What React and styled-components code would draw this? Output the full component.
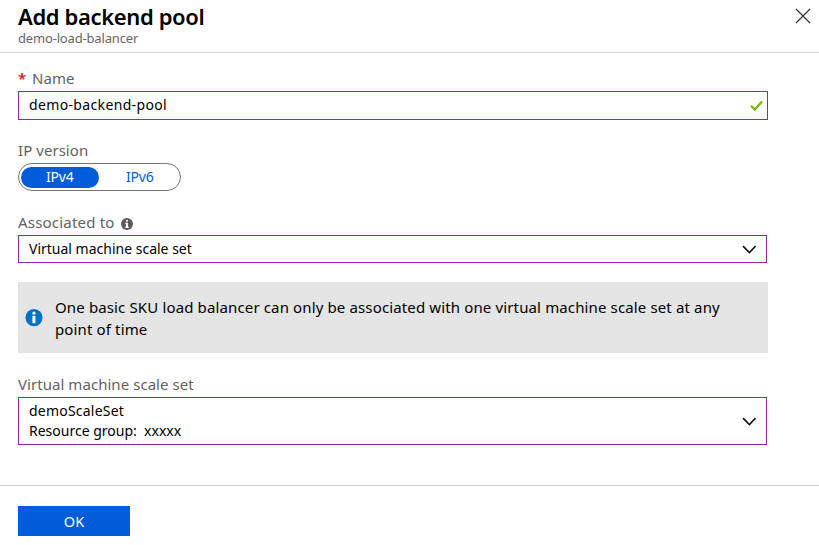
import React, { useState } from "react";
import styled, { createGlobalStyle } from "styled-components";

const GlobalStyle = createGlobalStyle`
  * { box-sizing: border-box; }
  html, body { margin: 0; background: #fff; overflow: hidden; }
  body, button { font-family: "Noto Sans", "Open Sans", sans-serif; }
`;

const Blade = styled.main`
  display: flex;
  flex-direction: column;
  height: 545px;
  color: #000;
`;

const Header = styled.header`
  display: flex;
  justify-content: space-between;
  height: 53px;
  padding: 3px 8px 0 18px;
  border-bottom: 1px solid #d2d2d2;
`;

const Title = styled.h1`
  margin: 0;
  font-size: 22px;
  font-weight: 600;
  line-height: 26px;
  letter-spacing: -0.37px;
`;

const Subtitle = styled.div`
  margin-top: 1px;
  font-size: 13px;
  line-height: 16px;
  letter-spacing: -0.17px;
  color: #666;
`;

const CloseButton = styled.button`
  display: flex;
  align-items: center;
  justify-content: center;
  width: 16px;
  height: 16px;
  margin-top: 5px;
  padding: 0;
  border: 0;
  background: none;
`;

const Form = styled.section`
  display: flex;
  flex-direction: column;
  height: 432px;
  padding: 13px 51px 0 18px;
`;

const Field = styled.div`
  display: flex;
  flex-direction: column;
  margin-bottom: ${({ $gap }) => $gap}px;
`;

const Label = styled.div`
  display: flex;
  align-items: center;
  height: 24px;
  margin-bottom: 1px;
  font-size: 15px;
  line-height: 24px;
  letter-spacing: ${({ $tracking = 0.05 }) => $tracking}px;
  color: #626262;
`;

const Required = styled.span`
  width: 14px;
  height: 24px;
  font-size: 15px;
  font-weight: 600;
  line-height: 24px;
  color: #e81123;
`;

const InfoMark = styled.span`
  display: flex;
  margin: 3px 0 0 6px;
`;

const Box = styled.div`
  display: flex;
  align-items: center;
  justify-content: space-between;
  width: ${({ $width }) => $width}px;
  height: ${({ $height }) => $height}px;
  padding: 0 ${({ $end }) => $end}px 0 10px;
  border: 1px solid #8a2da5;
`;

const Value = styled.div`
  font-size: 14px;
  line-height: 20px;
  letter-spacing: ${({ $tracking = 0 }) => $tracking}px;
  margin-top: ${({ $shift = 0 }) => $shift}px;
  white-space: pre;
`;

const Toggle = styled.div`
  display: flex;
  width: 163px;
  height: 28px;
  padding: 3px 2px;
  border: 1px solid #767676;
  border-radius: 14px;
`;

const Option = styled.button`
  width: ${({ $on }) => ($on ? 78 : 80)}px;
  height: 20.5px;
  padding: 0;
  border: 0;
  border-radius: 11px;
  font-size: 14px;
  line-height: 20px;
  letter-spacing: -0.15px;
  text-indent: ${({ $on }) => ($on ? 0 : 3)}px;
  background: ${({ $on }) => ($on ? "#015cda" : "transparent")};
  color: ${({ $on }) => ($on ? "#fff" : "#015cda")};
`;

const Notice = styled.div`
  display: flex;
  align-items: center;
  gap: 12px;
  width: 750px;
  height: 71px;
  margin-bottom: 19px;
  padding-left: 7px;
  background: #e5e5e5;
`;

const NoticeText = styled.p`
  margin: 1px 0 0;
  font-size: 15px;
  line-height: 22px;
  letter-spacing: 0.135px;
  white-space: nowrap;
`;

const Footer = styled.footer`
  flex: 1;
  padding: 20px 18px 0;
  border-top: 1px solid #d2d2d2;
`;

const OkButton = styled.button`
  display: block;
  width: 112px;
  height: 30px;
  padding: 0;
  border: 0;
  background: #015cda;
  color: #fff;
  font-size: 14.5px;
  line-height: 30px;
`;

const Close = () => (
  <svg width="16" height="16" viewBox="0 0 16 16" fill="none" stroke="#333" strokeWidth="1.2">
    <path d="M1 1l14 14M15 1L1 15" />
  </svg>
);

const Check = () => (
  <svg width="13" height="12" viewBox="0 0 13 12" fill="none" stroke="#76b900" strokeWidth="2.3">
    <path d="M1 5.7l3.9 3.9L12 1.4" />
  </svg>
);

const Chevron = () => (
  <svg width="14" height="9" viewBox="0 0 14 9" fill="none" stroke="#111" strokeWidth="1.6">
    <path d="M1 1.1L7.4 7.5l6.2-6.4" />
  </svg>
);

const LabelInfo = () => (
  <svg width="12" height="12" viewBox="0 0 12 12">
    <circle cx="6" cy="6" r="6" fill="#5c5c5c" />
    <path d="M5 2h2v1.6H5zM4.3 4.8H7v4h.8V10H4.3V8.8H5V6h-.7z" fill="#fff" />
  </svg>
);

const NoticeInfo = () => (
  <svg width="18" height="18" viewBox="0 0 18 18">
    <circle cx="9" cy="8.6" r="8.6" fill="#0072c6" />
    <circle cx="9" cy="4.2" r="1.6" fill="#fff" />
    <path d="M7.4 6.8h3v7.4h-3z" fill="#fff" />
  </svg>
);

export default function App() {
  const [version, setVersion] = useState("IPv4");
  return (
    <>
      <GlobalStyle />
      <Blade>
        <Header>
          <div>
            <Title>Add backend pool</Title>
            <Subtitle>demo-load-balancer</Subtitle>
          </div>
          <CloseButton aria-label="Close"><Close /></CloseButton>
        </Header>
        <Form>
          <Field $gap={18}>
            <Label><Required>*</Required>Name</Label>
            <Box $width={750} $height={29} $end={4}>
              <Value $tracking={0.35} $shift={-2}>demo-backend-pool</Value>
              <Check />
            </Box>
          </Field>
          <Field $gap={19}>
            <Label>IP version</Label>
            <Toggle>
              {["IPv4", "IPv6"].map((v) => (
                <Option key={v} $on={v === version} onClick={() => setVersion(v)}>{v}</Option>
              ))}
            </Toggle>
          </Field>
          <Field $gap={19}>
            <Label $tracking={0.2}>
              Associated to
              <InfoMark><LabelInfo /></InfoMark>
            </Label>
            <Box $width={749} $height={28} $end={10}>
              <Value>Virtual machine scale set</Value>
              <Chevron />
            </Box>
          </Field>
          <Notice>
            <NoticeInfo />
            <NoticeText>
              One basic SKU load balancer can only be associated with one virtual machine scale set at any
              <br />
              point of time
            </NoticeText>
          </Notice>
          <Field $gap={0}>
            <Label>Virtual machine scale set</Label>
            <Box $width={749} $height={48} $end={10}>
              <div>
                <Value $tracking={0.22}>demoScaleSet</Value>
                <Value>Resource group:  xxxxx</Value>
              </div>
              <Chevron />
            </Box>
          </Field>
        </Form>
        <Footer>
          <OkButton>OK</OkButton>
        </Footer>
      </Blade>
    </>
  );
}
